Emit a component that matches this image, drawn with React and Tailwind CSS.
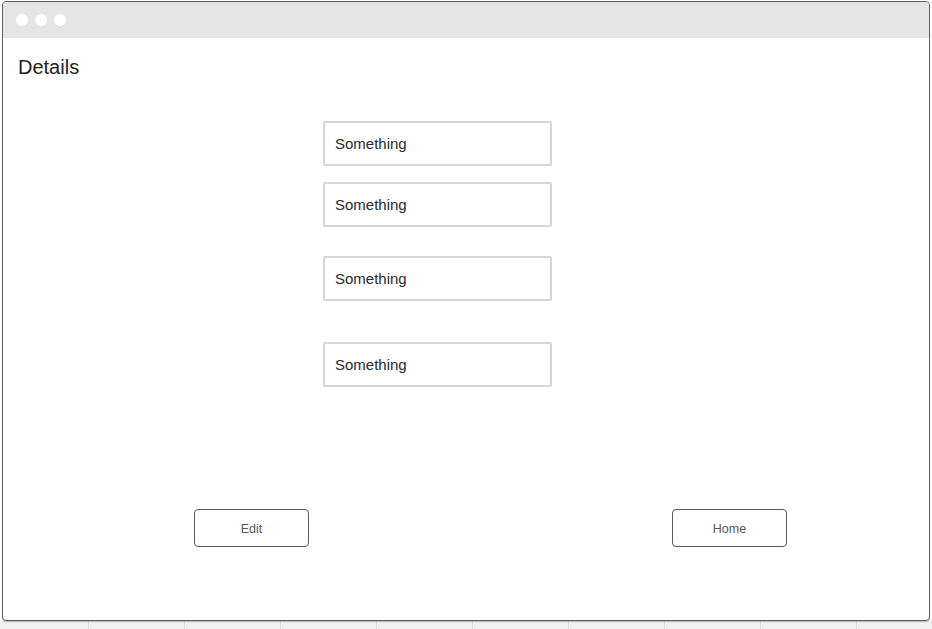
import React from "react";

const font = { fontFamily: '"Liberation Sans", Arial, sans-serif' };

function Field({ className = "" }) {
  return (
    <div
      className={`w-[229px] h-[45px] border-2 border-[#d6d6d6] rounded-[2px] flex items-center pl-[10px] pt-[2px] text-[15px] text-[#2a2a2a] ${className}`}
    >
      Something
    </div>
  );
}

function Btn({ children }) {
  return (
    <div className="w-[115px] h-[38px] border-[1.5px] border-[#5a5a5a] rounded-[4px] flex items-center justify-center pt-[2px] text-[12.5px] text-[#555]">
      {children}
    </div>
  );
}

export default function App() {
  const lines = [88, 184, 280, 376, 472, 568, 664, 760, 856];
  return (
    <div className="w-[932px] h-[629px] bg-white relative overflow-hidden" style={font}>
      <div className="pt-[1px] pl-[2px]">
        <div className="w-[928px] h-[620px] border border-[#606060] rounded-[4px] bg-white flex flex-col overflow-hidden shadow-[0_1px_1px_rgba(0,0,0,0.25)] relative z-10">
          <div className="h-[36px] bg-[#e5e5e5] flex items-center gap-[7px] pl-[13px] shrink-0">
            <div className="w-[12px] h-[12px] rounded-full bg-white" />
            <div className="w-[12px] h-[12px] rounded-full bg-white" />
            <div className="w-[12px] h-[12px] rounded-full bg-white" />
          </div>
          <div className="flex flex-col">
            <div className="mt-[17px] ml-[15px] text-[20px] leading-[24px] text-[#222]">Details</div>
            <div className="ml-[320px] mt-[42px] flex flex-col">
              <Field />
              <Field className="mt-[16px]" />
              <Field className="mt-[29px]" />
              <Field className="mt-[41px]" />
            </div>
            <div className="ml-[191px] mt-[122px] flex gap-[363px]">
              <Btn>Edit</Btn>
              <Btn>Home</Btn>
            </div>
          </div>
        </div>
      </div>
      <div className="absolute left-0 right-0 top-[621px] bottom-0 bg-[#f0f0f0]">
        {lines.map((x) => (
          <div key={x} className="absolute top-0 bottom-0 w-px bg-[#dcdcdc]" style={{ left: x }} />
        ))}
      </div>
    </div>
  );
}
